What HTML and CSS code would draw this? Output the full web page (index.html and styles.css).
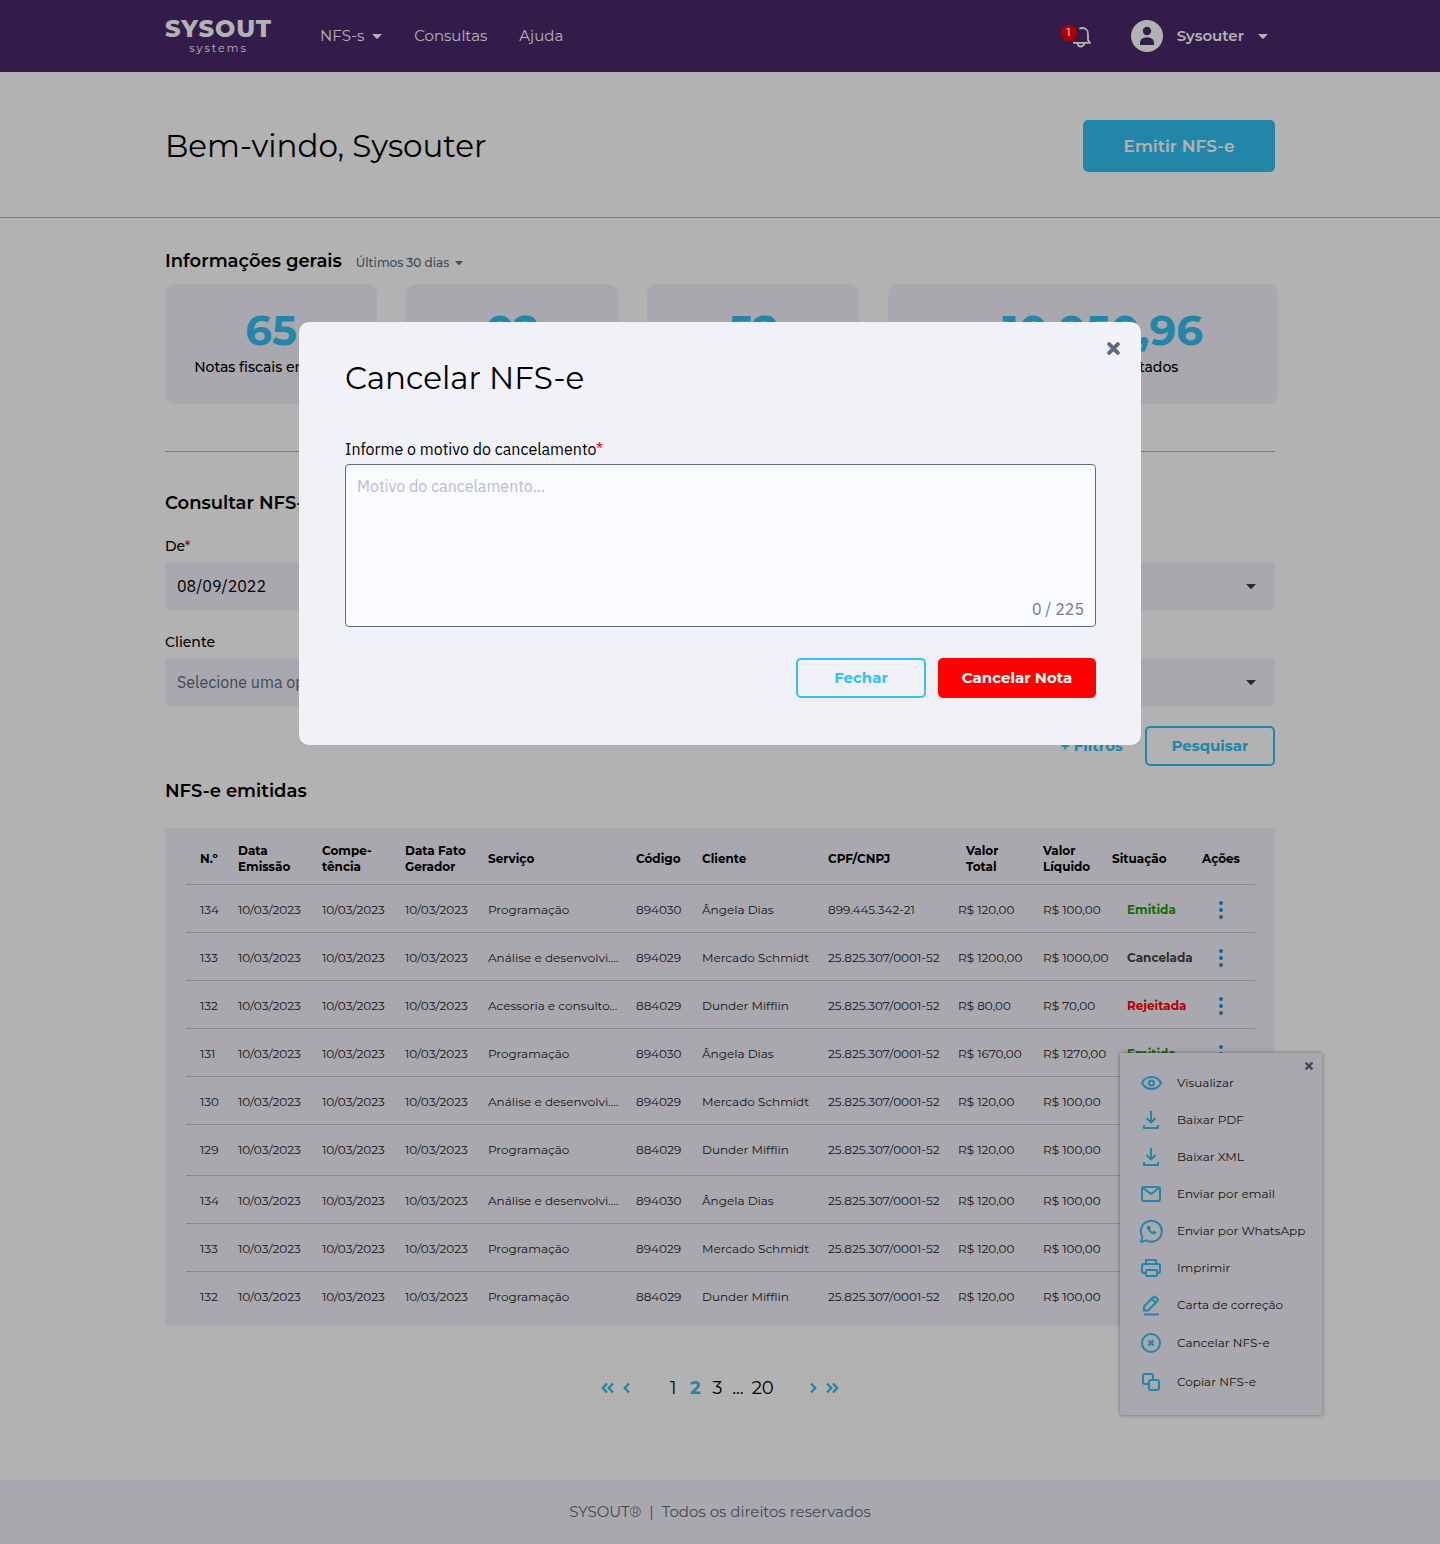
FILE: index.html
```html
<!DOCTYPE html>
<html lang="pt-BR">
<head>
<meta charset="utf-8">
<meta name="viewport" content="width=device-width, initial-scale=1">
<title>Sysout Systems – NFS-e</title>
<link rel="stylesheet" href="styles.css">
</head>
<body>
<svg class="sprite" aria-hidden="true">
  <symbol id="caret" viewBox="0 0 10 5"><path d="M0 0h10L5.700 4.600a1 1 0 0 1-1.400 0z" fill="currentColor"/></symbol>
  <symbol id="close" viewBox="0 0 12 12"><path d="M2 2l8 8M10 2l-8 8" fill="none" stroke="currentColor" stroke-width="3.600" stroke-linecap="round"/></symbol>
  <symbol id="dots" viewBox="0 0 4 18"><g fill="currentColor"><circle cx="2" cy="2" r="2"/><circle cx="2" cy="9" r="2"/><circle cx="2" cy="16" r="2"/></g></symbol>
  <symbol id="download" viewBox="0 0 24 24"><path d="M12 3v11M7.500 10l4.500 4.500 4.500-4.500M5 17v3h14v-3"/></symbol>
  <symbol id="chevron" viewBox="0 0 8 12"><path d="M6 1.500L1.800 6 6 10.500"/></symbol>
  <symbol id="chevrons" viewBox="0 0 14 12"><path d="M6 1.500L1.800 6 6 10.500M12 1.500L7.800 6l4.200 4.500"/></symbol>
</svg>

<header class="topbar">
  <div class="container topbar-inner">
    <a class="logo" href="#"><span class="logo-name">SYSOUT</span><span class="logo-sub">systems</span></a>
    <nav class="nav">
      <a href="#">NFS-s <svg class="caret"><use href="#caret"/></svg></a>
      <a href="#">Consultas</a>
      <a href="#">Ajuda</a>
    </nav>
    <button class="bell" type="button" aria-label="Notificações">
      <svg width="24" height="24" viewBox="0 0 24 24" fill="none" stroke="currentColor" stroke-width="1.800"><path d="M6 18.800h17l-2-2.700V10c0-3.800-2.400-6-5.700-6-1.200 0-2 .2-3 .7M10.500 19.500c.3 1.700 1.500 3 3.300 3s3-1.300 3.300-3" stroke-linejoin="round"/></svg>
      <span class="badge">1</span>
    </button>
    <button class="user" type="button">
      <svg class="avatar" viewBox="0 0 32 32"><circle cx="16" cy="16" r="16" fill="currentColor"/><circle cx="16" cy="11" r="4.200" class="avatar-ink"/><path d="M9 25v-2a5.500 5.500 0 0 1 5.500-5.500h3A5.500 5.500 0 0 1 23 23v2z" class="avatar-ink"/></svg>
      Sysouter
      <svg class="caret"><use href="#caret"/></svg>
    </button>
  </div>
</header>

<section class="welcome">
  <div class="container welcome-inner">
    <h1>Bem-vindo, Sysouter</h1>
    <button class="btn btn-primary" type="button">Emitir NFS-e</button>
  </div>
</section>

<main class="container">
  <section class="summary">
    <div class="summary-head">
      <h2>Informações gerais</h2>
      <button class="period" type="button">Últimos 30 dias <svg class="caret caret-small"><use href="#caret"/></svg></button>
    </div>
    <div class="cards">
      <div class="card"><strong>65</strong><span>Notas fiscais emitidas</span></div>
      <div class="card"><strong>02</strong><span>Notas canceladas</span></div>
      <div class="card"><strong>52</strong><span>Clientes</span></div>
      <div class="card"><strong><small>R$</small> 10.050,96</strong><span>Total de serviços prestados</span></div>
    </div>
  </section>

  <section class="search">
    <h2>Consultar NFS-e</h2>
    <form class="filters">
      <div class="field">
        <label for="from">De<span class="required">*</span></label>
        <div class="control"><input id="from" type="text" value="08/09/2022"></div>
      </div>
      <div class="field">
        <label for="to">Até<span class="required">*</span></label>
        <div class="control"><select id="to"><option>08/10/2022</option></select><svg class="caret"><use href="#caret"/></svg></div>
      </div>
      <div class="field">
        <label for="client">Cliente</label>
        <div class="control"><select id="client" class="empty"><option>Selecione uma opção</option></select><svg class="caret"><use href="#caret"/></svg></div>
      </div>
      <div class="field">
        <label for="status">Situação</label>
        <div class="control"><select id="status" class="empty"><option>Selecione uma opção</option></select><svg class="caret"><use href="#caret"/></svg></div>
      </div>
      <div class="filter-actions">
        <a href="#">+ Filtros</a>
        <button class="btn btn-outline" type="button">Pesquisar</button>
      </div>
    </form>
  </section>

  <section class="issued">
    <h2>NFS-e emitidas</h2>
    <div class="panel">
      <table>
        <colgroup><col class="c-num"><col class="c-issue"><col class="c-date"><col class="c-date"><col class="c-service"><col class="c-code"><col class="c-client"><col class="c-doc"><col class="c-total"><col class="c-net"><col class="c-status"><col class="c-act"></colgroup>
        <thead>
          <tr><th>N.º</th><th>Data<br>Emissão</th><th>Compe-<br>tência</th><th>Data Fato<br>Gerador</th><th>Serviço</th><th>Código</th><th>Cliente</th><th>CPF/CNPJ</th><th class="total">Valor<br>Total</th><th>Valor<br>Líquido</th><th>Situação</th><th>Ações</th></tr>
        </thead>
        <tbody>
          <tr><td>134</td><td>10/03/2023</td><td>10/03/2023</td><td>10/03/2023</td><td>Programação</td><td>894030</td><td>Ângela Dias</td><td>899.445.342-21</td><td>R$ 120,00</td><td>R$ 100,00</td><td class="status ok">Emitida</td><td><button class="more" type="button" aria-label="Ações"><svg><use href="#dots"/></svg></button></td></tr>
          <tr><td>133</td><td>10/03/2023</td><td>10/03/2023</td><td>10/03/2023</td><td>Análise e desenvolvi....</td><td>894029</td><td>Mercado Schmidt</td><td>25.825.307/0001-52</td><td>R$ 1200,00</td><td>R$ 1000,00</td><td class="status off">Cancelada</td><td><button class="more" type="button" aria-label="Ações"><svg><use href="#dots"/></svg></button></td></tr>
          <tr><td>132</td><td>10/03/2023</td><td>10/03/2023</td><td>10/03/2023</td><td>Acessoria e consulto...</td><td>884029</td><td>Dunder Mifflin</td><td>25.825.307/0001-52</td><td>R$ 80,00</td><td>R$ 70,00</td><td class="status bad">Rejeitada</td><td><button class="more" type="button" aria-label="Ações"><svg><use href="#dots"/></svg></button></td></tr>
          <tr><td>131</td><td>10/03/2023</td><td>10/03/2023</td><td>10/03/2023</td><td>Programação</td><td>894030</td><td>Ângela Dias</td><td>25.825.307/0001-52</td><td>R$ 1670,00</td><td>R$ 1270,00</td><td class="status ok">Emitida</td><td><button class="more" type="button" aria-label="Ações"><svg><use href="#dots"/></svg></button></td></tr>
          <tr><td>130</td><td>10/03/2023</td><td>10/03/2023</td><td>10/03/2023</td><td>Análise e desenvolvi....</td><td>894029</td><td>Mercado Schmidt</td><td>25.825.307/0001-52</td><td>R$ 120,00</td><td>R$ 100,00</td><td></td><td></td></tr>
          <tr class="group-end"><td>129</td><td>10/03/2023</td><td>10/03/2023</td><td>10/03/2023</td><td>Programação</td><td>884029</td><td>Dunder Mifflin</td><td>25.825.307/0001-52</td><td>R$ 120,00</td><td>R$ 100,00</td><td></td><td></td></tr>
          <tr><td>134</td><td>10/03/2023</td><td>10/03/2023</td><td>10/03/2023</td><td>Análise e desenvolvi....</td><td>894030</td><td>Ângela Dias</td><td>25.825.307/0001-52</td><td>R$ 120,00</td><td>R$ 100,00</td><td></td><td></td></tr>
          <tr><td>133</td><td>10/03/2023</td><td>10/03/2023</td><td>10/03/2023</td><td>Programação</td><td>894029</td><td>Mercado Schmidt</td><td>25.825.307/0001-52</td><td>R$ 120,00</td><td>R$ 100,00</td><td></td><td></td></tr>
          <tr><td>132</td><td>10/03/2023</td><td>10/03/2023</td><td>10/03/2023</td><td>Programação</td><td>884029</td><td>Dunder Mifflin</td><td>25.825.307/0001-52</td><td>R$ 120,00</td><td>R$ 100,00</td><td></td><td></td></tr>
        </tbody>
      </table>

      <div class="menu">
        <button class="menu-close" type="button" aria-label="Fechar menu"><svg><use href="#close"/></svg></button>
        <button type="button"><svg class="icon" viewBox="0 0 24 24"><path d="M3 12c2-4 5.300-6 9.500-6s7.500 2 9.500 6c-2 4-5.300 6-9.500 6S5 16 3 12z"/><circle cx="12.500" cy="12" r="2.500"/></svg>Visualizar</button>
        <button type="button"><svg class="icon"><use href="#download"/></svg>Baixar PDF</button>
        <button type="button"><svg class="icon"><use href="#download"/></svg>Baixar XML</button>
        <button type="button"><svg class="icon" viewBox="0 0 24 24"><rect x="3" y="5" width="18" height="14" rx="2"/><path d="M4 6l8 6 8-6"/></svg>Enviar por email</button>
        <button type="button"><svg class="icon" viewBox="0 0 24 24"><path d="M2 23l1.400-5.200A10.500 10.500 0 1 1 7.200 21.400z"/><path d="M8.500 7.500c-1.400 2.600 4.600 8.800 7.700 7.200l.5-1.400-2-1-1.200 1c-1.500-.6-2.300-1.500-3-2.900l.8-1-.9-2.100z" fill="currentColor" stroke-width="1"/></svg>Enviar por WhatsApp</button>
        <button type="button"><svg class="icon" viewBox="0 0 24 24"><path d="M7 8V4h10v4M7 17H5a2 2 0 0 1-2-2v-5a2 2 0 0 1 2-2h14a2 2 0 0 1 2 2v5a2 2 0 0 1-2 2h-2"/><rect x="7" y="14" width="11" height="6" rx="1"/></svg>Imprimir</button>
        <button type="button"><svg class="icon" viewBox="0 0 24 24"><path d="M5 21.500h15M5 17.500v-4l9.500-9.500a1.500 1.500 0 0 1 2 0l2 2a1.500 1.500 0 0 1 0 2L9 17.500zM13 6l4 4"/></svg>Carta de correção</button>
        <button class="tall" type="button"><svg class="icon" viewBox="0 0 24 24"><circle cx="12" cy="12" r="9"/><path d="M9.500 9.500l5 5M14.500 9.500l-5 5" stroke-width="2.400"/></svg>Cancelar NFS-e</button>
        <button class="tall" type="button"><svg class="icon" viewBox="0 0 24 24"><path d="M9 14H6a2 2 0 0 1-2-2V6a2 2 0 0 1 2-2h6a2 2 0 0 1 2 2v3"/><rect x="10" y="10" width="10" height="10" rx="2"/></svg>Copiar NFS-e</button>
      </div>
    </div>
  </section>

  <nav class="pages" aria-label="Paginação">
    <div class="arrows">
      <a href="#" aria-label="Primeira"><svg width="14" height="12"><use href="#chevrons"/></svg></a>
      <a href="#" aria-label="Anterior"><svg width="8" height="12"><use href="#chevron"/></svg></a>
    </div>
    <div class="numbers"><a href="#">1</a><a class="current" href="#">2</a><a href="#">3</a><span>...</span><a href="#">20</a></div>
    <div class="arrows next">
      <a href="#" aria-label="Última"><svg width="14" height="12"><use href="#chevrons"/></svg></a>
      <a href="#" aria-label="Próxima"><svg width="8" height="12"><use href="#chevron"/></svg></a>
    </div>
  </nav>
</main>

<footer class="footer">SYSOUT®&nbsp; |&nbsp; Todos os direitos reservados</footer>

<div class="overlay">
  <form class="modal" role="dialog" aria-modal="true" aria-labelledby="modal-title">
    <button class="modal-close" type="button" aria-label="Fechar"><svg><use href="#close"/></svg></button>
    <h2 id="modal-title">Cancelar NFS-e</h2>
    <label for="reason">Informe o motivo do cancelamento<span class="required">*</span></label>
    <div class="reason">
      <textarea id="reason" placeholder="Motivo do cancelamento..."></textarea>
      <span class="counter">0 / 225</span>
    </div>
    <div class="modal-actions">
      <button class="btn btn-outline" type="button">Fechar</button>
      <button class="btn btn-danger" type="submit">Cancelar Nota</button>
    </div>
  </form>
</div>
</body>
</html>
```
FILE: styles.css
```css
:root {
  --purple: #49286b;
  --blue: #31c1f2;
  --panel: #f3f1f9;
  --slate: #5e6a7d;
  --red: #ff0000;
  --sans: Montserrat, Inter, sans-serif;
  --form: "IBM Plex Sans", "Noto Sans", sans-serif;
}

* { box-sizing: border-box; }

body {
  margin: 0;
  background: #fff;
  color: #000;
  font: 400 14px/20px var(--sans);
}

a { color: inherit; text-decoration: none; }
h1, h2 { margin: 0; }
h1 { font-size: 31px; font-weight: 400; line-height: 40px; }
h2 { font-size: 18px; font-weight: 600; line-height: 24px; }

button {
  padding: 0;
  border: 0;
  background: none;
  color: inherit;
  font: inherit;
  cursor: pointer;
}

.sprite { position: absolute; width: 0; height: 0; }
.container { width: calc(100% - 48px); max-width: 1110px; margin: 0 auto; }
.caret { width: 10px; height: 5px; flex: none; }
.caret-small { width: 8px; height: 4px; }
.required { color: var(--red); }

/* Top bar */
.topbar { background: var(--purple); color: #fff; }
.topbar-inner { display: flex; align-items: center; height: 72px; padding-right: 7px; }
.logo { display: flex; flex-direction: column; align-items: center; width: 107px; margin-right: 48px; }
.logo-name { font-size: 24px; font-weight: 800; line-height: 24px; letter-spacing: 1px; }
.logo-sub { font-size: 11px; line-height: 14px; letter-spacing: 2px; }
.nav { display: flex; gap: 32px; font-size: 15px; }
.nav a { display: flex; align-items: center; gap: 8px; }
.bell { position: relative; width: 24px; height: 24px; margin: 0 40px 0 auto; }
.bell svg { display: block; }
.badge {
  position: absolute;
  top: 1px;
  left: -6px;
  width: 16px;
  height: 16px;
  border-radius: 8px;
  background: var(--red);
  font-size: 10px;
  font-weight: 600;
  line-height: 16px;
}
.user { display: flex; align-items: center; gap: 14px; font-size: 15px; font-weight: 600; }
.avatar { width: 32px; height: 32px; }
.avatar-ink { fill: var(--purple); }

/* Buttons */
.btn {
  min-width: 130px;
  height: 40px;
  border-radius: 5px;
  font-size: 15px;
  font-weight: 700;
}
.btn-primary { width: 192px; height: 52px; background: var(--blue); color: #fff; font-size: 17px; font-weight: 600; }
.btn-outline { border: 2px solid var(--blue); color: var(--blue); }
.btn-danger { min-width: 158px; background: var(--red); color: #fff; }

/* Welcome */
.welcome { padding: 48px 0 45px; border-bottom: 1px solid #b0b3be; }
.welcome-inner { display: flex; align-items: center; justify-content: space-between; }

/* Summary */
.summary { padding: 31px 0 47px; border-bottom: 1px solid #b0b3be; }
.summary-head { display: flex; align-items: center; gap: 14px; margin-bottom: 11px; }
.period { display: flex; align-items: center; gap: 6px; padding-top: 4px; color: var(--slate); font-size: 12px; font-weight: 500; }
.cards { display: grid; grid-template-columns: 212fr 212fr 212fr 390fr; gap: 29px; margin-right: -3px; }
.card {
  display: flex;
  flex-direction: column;
  align-items: center;
  height: 120px;
  padding-top: 22px;
  border-radius: 10px;
  background: var(--panel);
  font-weight: 500;
}
.card strong { margin-bottom: 3px; color: var(--blue); font-size: 42px; font-weight: 700; line-height: 48px; }
.card small { font-size: 20px; line-height: 20px; }

/* Search */
.search { padding: 39px 0 13px; }
.filters { display: grid; grid-template-columns: 1fr 1fr; gap: 22px 30px; margin-top: 21px; }
.field { display: grid; gap: 6px; }
.field label { font-weight: 500; }
.control { display: grid; align-items: center; }
.control > * { grid-area: 1 / 1; }
.control .caret { justify-self: end; margin-right: 19px; color: #333a4a; pointer-events: none; }
.control input,
.control select {
  width: 100%;
  height: 48px;
  padding: 0 12px;
  border: 0;
  border-radius: 4px;
  background: var(--panel);
  color: #000;
  font: 400 16px/24px var(--form);
  appearance: none;
}
.control .empty { color: var(--slate); }
.filter-actions {
  display: flex;
  grid-column: 1 / -1;
  align-items: center;
  justify-content: flex-end;
  gap: 22px;
  margin-top: -2px;
  color: var(--blue);
  font-size: 15px;
  font-weight: 700;
}

/* Issued notes */
.panel { position: relative; margin-top: 25px; padding: 0 20px 7px 21px; background: var(--panel); }
table { width: 100%; table-layout: fixed; border-spacing: 0; font-size: 12px; line-height: 16px; white-space: nowrap; }
.c-num { width: 52px; }
.c-issue { width: 84px; }
.c-date { width: 83px; }
.c-service { width: 148px; }
.c-code { width: 66px; }
.c-client { width: 126px; }
.c-doc { width: 130px; }
.c-total { width: 85px; }
.c-net { width: 69px; }
.c-status { width: 90px; }
.c-act { width: 53px; }
th, td { padding: 0; border-bottom: 1px solid #c4c3c8; text-align: left; }
th { height: 57px; padding-top: 5px; font-weight: 700; }
td { height: 48px; padding-top: 3px; color: #222; }
th:first-child, td:first-child { padding-left: 14px; }
tr:last-child td { height: 47px; border-bottom: 0; }
thead tr:last-child th { border-bottom: 1px solid #c4c3c8; }
.group-end td { height: 51px; padding-bottom: 3px; }
.total { padding-left: 8px; }
.status { padding-left: 15px; font-weight: 700; }
.ok { color: #1f9c00; }
.off { color: #444; }
.bad { color: var(--red); }
.more { display: block; width: 38px; height: 18px; color: #1a8fe0; }
.more svg { display: block; width: 4px; height: 18px; margin: 0 auto; }

/* Row action menu */
.menu {
  position: absolute;
  top: 225px;
  right: -47px;
  display: flex;
  flex-direction: column;
  width: 202px;
  padding: 11px 0 14px;
  background: var(--panel);
  box-shadow: 0 0 4px rgba(0, 0, 0, .4);
  font-size: 12px;
}
.menu > button { display: flex; align-items: center; gap: 14px; height: 37px; padding-left: 19px; color: #222; white-space: nowrap; }
.menu > .tall { height: 39px; }
.icon { width: 24px; height: 24px; flex: none; fill: none; stroke: currentColor; stroke-width: 2; stroke-linejoin: round; color: var(--blue); }
.menu > .menu-close { position: absolute; top: 9px; right: 9px; height: 8px; padding: 0; color: var(--slate); }
.menu-close svg { width: 8px; height: 8px; }

/* Pagination */
.pages { display: flex; justify-content: center; gap: 35px; margin: 50px 0 80px; font-size: 18px; line-height: 24px; }
.numbers { display: flex; gap: 8px; text-align: center; }
.numbers a { min-width: 14px; }
.current { color: var(--blue); font-weight: 700; }
.arrows { display: flex; align-items: center; gap: 8px; }
.arrows a { display: flex; }
.arrows svg { fill: none; stroke: var(--blue); stroke-width: 2.400; }
.next { transform: rotate(180deg); }

.footer { padding: 22px 0; background: var(--panel); color: var(--slate); font-size: 15px; text-align: center; }

/* Cancel dialog */
.overlay {
  position: fixed;
  inset: 0;
  display: flex;
  align-items: flex-start;
  justify-content: center;
  padding: 322px 24px 24px;
  background: rgba(0, 0, 0, .3);
}
.modal {
  position: relative;
  width: 100%;
  max-width: 842px;
  padding: 36px 45px 47px 46px;
  border-radius: 10px;
  background: #f1f2f8;
}
.modal h2 { margin-bottom: 39px; font-size: 31px; font-weight: 400; line-height: 40px; }
.modal label { display: block; margin-bottom: 3px; font: 400 16px/24px var(--form); }
.modal-close { position: absolute; top: 20px; right: 21px; height: 13px; color: var(--slate); }
.modal-close svg { display: block; width: 13px; height: 13px; }
.reason { display: grid; font: 400 16px/24px var(--form); }
.reason > * { grid-area: 1 / 1; }
.reason textarea {
  width: 100%;
  height: 163px;
  padding: 9px 11px;
  border: 1px solid var(--slate);
  border-radius: 4px;
  background: #fafbfe;
  font: inherit;
  resize: none;
}
.reason textarea::placeholder { color: #bbbdcf; opacity: 1; }
.counter { place-self: end; padding: 0 12px 6px; color: #747888; }
.modal-actions { display: flex; justify-content: flex-end; gap: 12px; margin-top: 31px; }
```
